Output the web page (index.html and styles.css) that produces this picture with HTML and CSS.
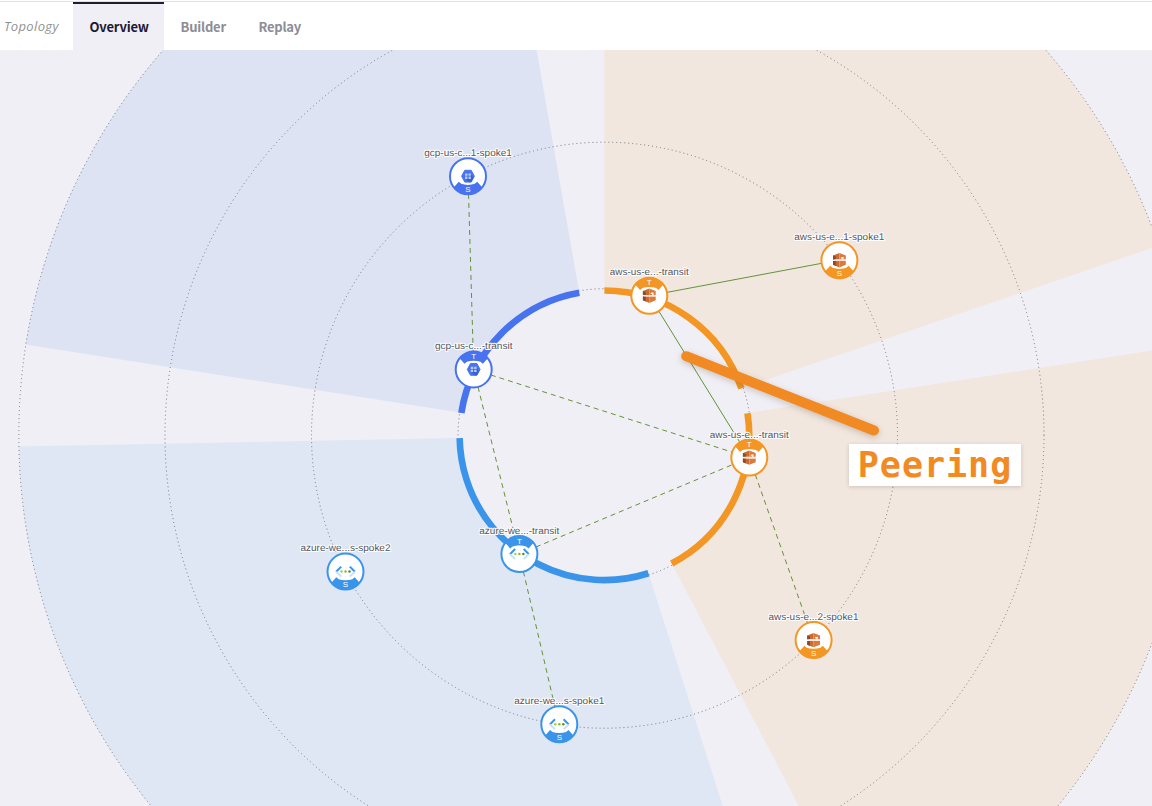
FILE: index.html
```
<!DOCTYPE html>
<html lang="en">
<head>
<meta charset="utf-8">
<title>Topology</title>
<link rel="stylesheet" href="styles.css">
</head>
<body>
<header class="tabs">
  <span class="title">Topology</span>
  <a class="tab active">Overview</a>
  <a class="tab">Builder</a>
  <a class="tab">Replay</a>
</header>
<main class="canvas">
<svg class="map" viewBox="0 50 1152 756" width="1152" height="756">
  <defs>
    <g id="base"><circle r="18" class="disc"/></g>
    <path id="cap" d="M-14.4,-11.4 L-9.2,-5.6 L-6.8,-7.6 Q-4,-8.5 0,-8.7 Q4,-8.5 6.8,-7.6 L9.2,-5.6 L14.4,-11.4 A18.4 18.4 0 0 0 -14.4,-11.4Z"/>
    <g id="transit"><use href="#base"/><use href="#cap" class="cap"/><text class="role" y="-10.4">T</text></g>
    <g id="spoke"><use href="#base"/><use href="#cap" class="cap" transform="scale(1,-1)"/><text class="role" y="15.8">S</text></g>
    <g id="aws">
      <path fill="#c86c32" d="M-6.4,-4.6 L0,-7.2 V-.8 H-6.4Z M-6.4,.8 H0 V7.2 L-6.4,4.6Z"/>
      <path fill="#dc7a3c" d="M0,-7.2 L6.4,-4.6 V-.8 H0Z M0,.8 H6.4 V4.6 L0,7.2Z"/>
      <path fill="#8a4b2a" d="M-6.4,-4.6 L-3.6,-3.6 V-.8 H-6.4Z M-6.4,.8 H-3.6 V5.8 L-6.4,4.6Z"/>
      <path fill="#fff" d="M1.4,-2.8 L4.2,-3.4 V-.8 H2.8 V-1.8H1.4Z"/>
      <path fill="#fbe6d8" d="M-5.4,-.7 H6.4 V.7 H-5.4Z"/>
    </g>
    <g id="gcp">
      <path fill="#4a74ee" stroke="#4a74ee" stroke-linejoin="round" d="M-3.2,-5.9 H3.2 L6.4,0 L3.2,5.9 H-3.2 L-6.4,0Z"/>
      <path fill="#3760d2" d="M-2.5,2.5 L2.5,-2.5 L5.4,1.5 L3,5.9 H1Z"/>
      <path fill="#b9c9f8" d="M-2.9,-2.7h2.4v2.3h-2.4z M.5,-2.7h2.4v2.3H.5z M-2.9,.4h2.4v2.3h-2.4z M.5,.4h2.4v2.3H.5z"/>
    </g>
    <g id="azure">
      <path fill="none" stroke="#3c95e8" stroke-width="2" d="M-4.3,-5 L-9.4,.2 M4.3,-5 L9.4,.2"/>
      <path fill="none" stroke="#c9e3fa" stroke-width="2" d="M-9.4,.2 L-4.3,5 M9.4,.2 L4.3,5"/>
      <circle cx="-4" r="1.25" fill="#a0d050"/><circle r="1.25" fill="#85bd3c"/><circle cx="4" r="1.25" fill="#579020"/>
    </g>
  </defs>

  <g class="sectors" transform="translate(604.4 435.2)">
    <circle class="warm" r="367" pathLength="360" stroke-dasharray="71.1 288.9" transform="rotate(-90)"/>
    <circle class="warm" r="367" pathLength="360" stroke-dasharray="71.1 288.9" transform="rotate(-8.8)"/>
    <circle class="sky" r="367" pathLength="360" stroke-dasharray="106.6 253.4" transform="rotate(72.3)"/>
    <circle class="indigo" r="367" pathLength="360" stroke-dasharray="71.1 288.9" transform="rotate(188.9)"/>
  </g>
  <g class="rings" transform="translate(604.5 435.2)">
    <circle r="146.5"/><circle r="293"/><circle r="439.5"/><circle r="585.7"/>
  </g>
  <g class="arcs" transform="translate(604.4 435.3)">
    <circle stroke="#f39623" r="144.8" pathLength="360" stroke-dasharray="71.1 288.9" transform="rotate(-90)"/>
    <circle stroke="#f39623" r="144.8" pathLength="360" stroke-dasharray="71.1 288.9" transform="rotate(-8.8)"/>
    <circle stroke="#3a94ea" r="144.8" pathLength="360" stroke-dasharray="106.6 253.4" transform="rotate(72.3)"/>
    <circle stroke="#4873ef" r="144.8" pathLength="360" stroke-dasharray="71.1 288.9" transform="rotate(188.9)"/>
  </g>
  <g class="links">
    <path d="M649.3,295.7 L839.3,260 M649.3,295.7 L749.3,457.6"/>
    <path class="dashed" d="M468,176 L473.7,369.5"/>
    <path class="dashed" d="M473.7,369.5 L749.3,457.6"/>
    <path class="dashed" d="M473.7,369.5 L519.3,554"/>
    <path class="dashed" d="M519.3,554 L749.3,457.6"/>
    <path class="dashed" d="M519.3,554 L559,724.3"/>
    <path class="dashed" d="M749.3,457.6 L813.5,640"/>
  </g>

  <g class="node n-gcp" transform="translate(468 176.2)"><use href="#spoke"/><use href="#gcp"/></g>
  <g class="node n-gcp" transform="translate(473.7 369.4)"><use href="#transit"/><use href="#gcp"/></g>
  <g class="node n-aws" transform="translate(649.3 295.7)"><use href="#transit"/><use href="#aws"/></g>
  <g class="node n-aws" transform="translate(839.4 260.2)"><use href="#spoke"/><use href="#aws"/></g>
  <g class="node n-aws" transform="translate(749.3 457.6)"><use href="#transit"/><use href="#aws"/></g>
  <g class="node n-aws" transform="translate(813.6 640.1)"><use href="#spoke"/><use href="#aws"/></g>
  <g class="node n-azure" transform="translate(519.4 554)"><use href="#transit"/><use href="#azure"/></g>
  <g class="node n-azure" transform="translate(345.5 571.6)"><use href="#spoke"/><use href="#azure"/></g>
  <g class="node n-azure" transform="translate(559.3 724.3)"><use href="#spoke"/><use href="#azure"/></g>

  <g class="labels">
    <text x="468" y="156.2" textLength="87.5" lengthAdjust="spacingAndGlyphs">gcp-us-c...1-spoke1</text>
    <text x="473.7" y="349.2" textLength="77.5" lengthAdjust="spacingAndGlyphs">gcp-us-c...-transit</text>
    <text x="649.3" y="275.2" textLength="79" lengthAdjust="spacingAndGlyphs">aws-us-e...-transit</text>
    <text x="839.3" y="240.2" textLength="90" lengthAdjust="spacingAndGlyphs">aws-us-e...1-spoke1</text>
    <text x="749.3" y="438" textLength="79" lengthAdjust="spacingAndGlyphs">aws-us-e...-transit</text>
    <text x="813.5" y="620.2" textLength="90" lengthAdjust="spacingAndGlyphs">aws-us-e...2-spoke1</text>
    <text x="519.3" y="534.2" textLength="80" lengthAdjust="spacingAndGlyphs">azure-we...-transit</text>
    <text x="345.5" y="551.2" textLength="90" lengthAdjust="spacingAndGlyphs">azure-we...s-spoke2</text>
    <text x="559.3" y="704" textLength="90" lengthAdjust="spacingAndGlyphs">azure-we...s-spoke1</text>
  </g>
  <path class="pointer" d="M686.2,356.2 L874,430.5"/>
</svg>
<div class="callout">Peering</div>
</main>
</body>
</html>
```
FILE: styles.css
```
body {
  margin: 0;
  height: 806px;
  overflow: hidden;
  display: flex;
  flex-direction: column;
  background: #f0eff5;
}
.tabs {
  height: 50px;
  box-sizing: border-box;
  padding-top: 1px;
  display: flex;
  background: linear-gradient(#fff 1px, #e0e1e4 1px, #e0e1e4 2px, #fff 2px);
  font: bold 13px/48px "Noto Sans CJK JP", sans-serif;
  color: #8b8c96;
}
.title {
  width: 69px;
  padding-left: 4px;
  line-height: 50px;
  font-family: "Open Sans", sans-serif;
  font-size: 13px;
  letter-spacing: 0.35px;
  font-weight: normal;
  font-style: italic;
  color: #929292;
}
.tab {
  box-sizing: border-box;
  height: 48px;
  line-height: 45px;
  margin-top: 1px;
  padding: 2px 16px 0 16.5px;
  letter-spacing: -0.2px;
}
.active {
  width: 91px;
  padding-top: 0;
  border-top: 2px solid #201c35;
  background: #f0eff5;
  color: #1e1a33;
}
.canvas {
  position: relative;
  height: 756px;
}
.map {
  display: block;
}
.sectors circle {
  fill: none;
  stroke-width: 438;
}
.warm { stroke: #f1e7df; }
.sky { stroke: #dfe6f4; }
.indigo { stroke: #dee3f3; }
.rings circle {
  fill: none;
  stroke: #74777e;
  stroke-width: 1;
  stroke-dasharray: 1 3;
}
.arcs circle {
  fill: none;
  stroke-width: 6.6;
}
.links path {
  fill: none;
  stroke: #659238;
  stroke-width: 1;
}
.links .dashed {
  stroke-dasharray: 5 4;
}
.n-gcp { color: #4873ef; }
.n-aws { color: #f39623; }
.n-azure { color: #3a94ea; }
.disc {
  fill: #fff;
  stroke: currentColor;
  stroke-width: 2;
}
.cap {
  fill: currentColor;
}
.role {
  font: 8px "Liberation Sans", sans-serif;
  fill: #fff;
  text-anchor: middle;
}
.labels text {
  font: 9.8px "Liberation Sans", sans-serif;
  text-rendering: geometricPrecision;
  fill: #55555c;
  text-anchor: middle;
  stroke: #fff;
  stroke-width: 2px;
  stroke-linejoin: round;
  paint-order: stroke;
}
.pointer {
  stroke: #f18a22;
  stroke-width: 10;
  stroke-linecap: round;
  filter: drop-shadow(0 2px 3px rgba(80, 50, 30, 0.25));
}
.callout {
  position: absolute;
  left: 849px;
  top: 393.5px;
  width: 172px;
  height: 42px;
  background: #fff;
  box-shadow: 0 1px 4px rgba(80, 60, 40, 0.22);
  color: #f18a22;
  font: bold 35px/43px "DejaVu Sans Mono", monospace;
  letter-spacing: 1px;
  text-align: center;
}
```
